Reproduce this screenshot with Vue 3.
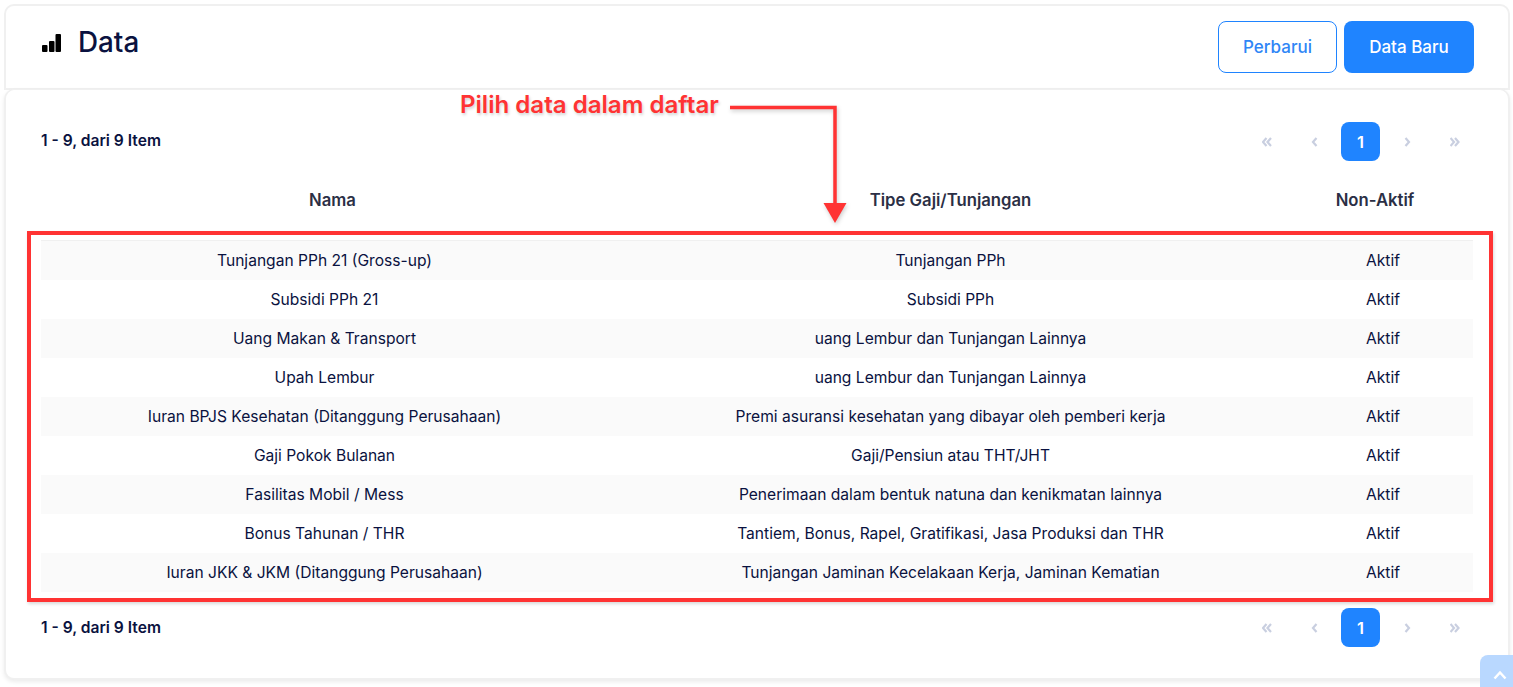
<script setup>
const rows = [
  ['Tunjangan PPh 21 (Gross-up)', 'Tunjangan PPh', 'Aktif'],
  ['Subsidi PPh 21', 'Subsidi PPh', 'Aktif'],
  ['Uang Makan & Transport', 'uang Lembur dan Tunjangan Lainnya', 'Aktif'],
  ['Upah Lembur', 'uang Lembur dan Tunjangan Lainnya', 'Aktif'],
  ['Iuran BPJS Kesehatan (Ditanggung Perusahaan)', 'Premi asuransi kesehatan yang dibayar oleh pemberi kerja', 'Aktif'],
  ['Gaji Pokok Bulanan', 'Gaji/Pensiun atau THT/JHT', 'Aktif'],
  ['Fasilitas Mobil / Mess', 'Penerimaan dalam bentuk natuna dan kenikmatan lainnya', 'Aktif'],
  ['Bonus Tahunan / THR', 'Tantiem, Bonus, Rapel, Gratifikasi, Jasa Produksi dan THR', 'Aktif'],
  ['Iuran JKK & JKM (Ditanggung Perusahaan)', 'Tunjangan Jaminan Kecelakaan Kerja, Jaminan Kematian', 'Aktif'],
]
const chevrons = {
  first: 'M4.500 1L1 5L4.500 9M9 1L5.500 5L9 9',
  prev: 'M7.500 1L4 5L7.500 9',
  next: 'M2.500 1L6 5L2.500 9',
  last: 'M0.500 1L4 5L0.500 9M5 1L8.500 5L5 9',
}
</script>

<template>
  <div class="page">
    <header class="card head">
      <div class="title">
        <svg class="bars" width="19" height="18" viewBox="0 0 19 18">
          <rect x="0" y="11" width="5.500" height="7" rx="1" />
          <rect x="7" y="7" width="5.500" height="11" rx="1" />
          <rect x="13.500" y="0" width="5.500" height="18" rx="1" />
        </svg>
        <h1>Data</h1>
      </div>
      <div class="actions">
        <button class="btn outline">Perbarui</button>
        <button class="btn solid">Data Baru</button>
      </div>
    </header>

    <section class="card body">
      <div class="pager-row top">
        <span class="count">1 - 9, dari 9 Item</span>
        <div class="pager">
          <span class="pg"><svg width="10" height="10" viewBox="0 0 10 10"><path :d="chevrons.first" /></svg></span>
          <span class="pg"><svg width="10" height="10" viewBox="0 0 10 10"><path :d="chevrons.prev" /></svg></span>
          <span class="pg on">1</span>
          <span class="pg"><svg width="10" height="10" viewBox="0 0 10 10"><path :d="chevrons.next" /></svg></span>
          <span class="pg"><svg width="10" height="10" viewBox="0 0 10 10"><path :d="chevrons.last" /></svg></span>
        </div>
      </div>

      <div class="thead">
        <div>Nama</div>
        <div>Tipe Gaji/Tunjangan</div>
        <div>Non-Aktif</div>
      </div>

      <div class="tbody">
        <div v-for="(r, i) in rows" :key="i" class="row">
          <div v-for="(c, j) in r" :key="j">{{ c }}</div>
        </div>
      </div>

      <div class="pager-row bottom">
        <span class="count">1 - 9, dari 9 Item</span>
        <div class="pager">
          <span class="pg"><svg width="10" height="10" viewBox="0 0 10 10"><path :d="chevrons.first" /></svg></span>
          <span class="pg"><svg width="10" height="10" viewBox="0 0 10 10"><path :d="chevrons.prev" /></svg></span>
          <span class="pg on">1</span>
          <span class="pg"><svg width="10" height="10" viewBox="0 0 10 10"><path :d="chevrons.next" /></svg></span>
          <span class="pg"><svg width="10" height="10" viewBox="0 0 10 10"><path :d="chevrons.last" /></svg></span>
        </div>
      </div>
    </section>

    <div class="note">Pilih data dalam daftar</div>
    <svg class="arrow" width="120" height="125" viewBox="0 0 120 125">
      <path d="M0 2.500H105V100" fill="none" stroke="#ff3333" stroke-width="3.500" />
      <path d="M93.500 98H116.500L105 118Z" fill="#ff3333" />
    </svg>
    <div class="frame"></div>
    <div class="totop">
      <svg width="14" height="10" viewBox="0 0 14 10"><path d="M1.500 8.500L7 2.500L12.500 8.500" fill="none" stroke="#fff" stroke-width="2.500" /></svg>
    </div>
  </div>
</template>

<style>
html, body { margin: 0; background: #fff; }
</style>

<style scoped>
.page {
  position: relative;
  width: 1513px;
  height: 687px;
  overflow: hidden;
  box-sizing: border-box;
  padding: 4px 3px 0 4px;
  font-family: Inter, "Liberation Sans", sans-serif;
  color: #0a1240;
  background: #fff;
}
.card {
  background: #fff;
  border: 1px solid #f0f0f0;
  border-radius: 10px;
  box-sizing: border-box;
}
.head {
  height: 86px;
  display: flex;
  justify-content: space-between;
  align-items: flex-start;
  padding: 11px 34px 0 36px;
  border-width: 2px;
  border-radius: 10px 10px 0 0;
}
.title { display: flex; align-items: center; gap: 17px; padding-top: 9px; }
.bars { fill: #000; margin-top: 2px; }
h1 { margin: 0; font-size: 27.800px; line-height: 32px; font-weight: 500; }
.actions { display: flex; gap: 7px; padding-top: 4px; }
.btn {
  height: 52px;
  border-radius: 8px;
  font: 500 17px Inter, sans-serif;
  box-sizing: border-box;
  padding: 0;
}
.outline { width: 119px; background: #fff; color: #2f86f6; border: 1px solid #1f84ff; }
.solid { width: 130px; background: #1f84ff; color: #fff; border: 0; }
.body {
  height: 591px;
  margin-top: -1px;
  padding: 32px 35px 0 35px;
  border-width: 1px 2px 2px 2px;
  box-shadow: 0 2px 4px rgba(0, 0, 0, 0.08);
}
.pager-row { display: flex; justify-content: space-between; align-items: center; height: 39px; }
.count { font-size: 15.600px; font-weight: 600; }
.top .count { margin-top: -2px; }
.pager { display: flex; gap: 8px; margin-right: -1px; }
.pg {
  width: 39px;
  height: 39px;
  display: flex;
  align-items: center;
  justify-content: center;
  border-radius: 8px;
}
.pg svg { fill: none; stroke: #c9cfe0; stroke-width: 2.200; }
.on { background: #1f84ff; color: #fff; font-size: 16.500px; font-weight: 600; }
.thead {
  display: grid;
  grid-template-columns: 583px 653px 196px;
  text-align: center;
  margin-top: 20px;
  height: 38px;
  line-height: 38px;
  font-size: 16.700px;
  font-weight: 600;
  color: #2b2f45;
}
.tbody { margin-top: 21px; border-top: 1px solid #f0f0f0; }
.row {
  display: grid;
  grid-template-columns: 567px 685px 180px;
  text-align: center;
  height: 39px;
  line-height: 39px;
  font-size: 15.600px;
}
.row:nth-child(odd) { background: #fafafa; }
.bottom { margin-top: 16px; }

.note {
  position: absolute;
  left: 460px;
  top: 90px;
  font-size: 24.100px;
  line-height: 30px;
  font-weight: 600;
  color: #ff3333;
  text-shadow: 1px 2px 3px rgba(0, 0, 0, 0.18);
}
.arrow {
  position: absolute;
  left: 730px;
  top: 105px;
  filter: drop-shadow(1px 2px 2px rgba(0, 0, 0, 0.2));
}
.frame {
  position: absolute;
  left: 27px;
  top: 231px;
  width: 1466px;
  height: 371px;
  box-sizing: border-box;
  border: 4px solid #ff3333;
  box-shadow: 1px 2px 3px rgba(0, 0, 0, 0.15);
}
.totop {
  position: absolute;
  left: 1480px;
  top: 655px;
  width: 40px;
  height: 40px;
  border-radius: 8px;
  background: #b9d8ff;
  display: flex;
  justify-content: center;
  padding-top: 15px;
  box-sizing: border-box;
}
</style>
